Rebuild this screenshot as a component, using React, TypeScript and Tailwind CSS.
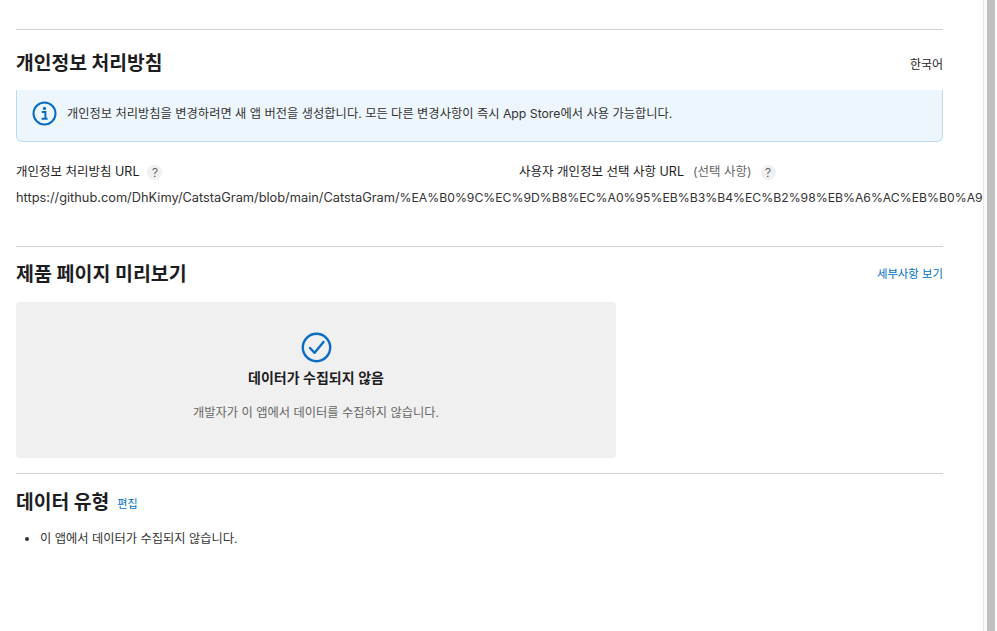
import React from "react";

const fontStack = "font-['Inter','Noto_Sans_CJK_KR',sans-serif]";

const urlPath = "https://github.com/DhKimy/CatstaGram/blob/main/CatstaGram/";
const urlEncoded = "%EA%B0%9C%EC%9D%B8%EC%A0%95%EB%B3%B4%EC%B2%98%EB%A6%AC%EB%B0%A9%EC%B9%A8.md";

const HelpBadge: React.FC = () => (
  <span className="w-[15px] h-[15px] rounded-full bg-[#f0f0f0] text-[#444] text-[12px] font-light leading-[15px] text-center">
    ?
  </span>
);

export default function App() {
  return (
    <div className={`${fontStack} flex h-[631px] w-[997px] overflow-hidden bg-white text-[#1d1d1f]`}>
      <main className="w-[983px] shrink-0 overflow-hidden pl-4 pt-[29px]">
        <div className="w-[927px]">
          {/* Privacy policy */}
          <section className="border-t border-[#d2d2d2]">
            <div className="flex h-[60px] items-start justify-between">
              <h2 className="mt-[19px] text-[19.3px] leading-[28px] font-bold">개인정보 처리방침</h2>
              <span className="mt-[27px] text-xs leading-[16px]">한국어</span>
            </div>
            <div className="flex h-[52px] items-center gap-[10px] rounded-b-md border border-t-0 border-[#bfdcf5] bg-[#eef6fd] pb-1 pl-[15px]">
              <svg width="25" height="25" viewBox="0 0 25 25" fill="none">
                <circle cx="12.5" cy="12.5" r="11" stroke="#0a6cc4" strokeWidth="2" />
                <circle cx="12.5" cy="7.4" r="1.6" fill="#0a6cc4" />
                <path d="M9.8 11h3.6v6.6M9.6 17.8h6" stroke="#0a6cc4" strokeWidth="2" />
              </svg>
              <p className="text-[12.25px] leading-[16px] text-[#333]">
                개인정보 처리방침을 변경하려면 새 앱 버전을 생성합니다. 모든 다른 변경사항이 즉시 App Store에서 사용 가능합니다.
              </p>
            </div>
            <div className="mt-[22px] flex h-4 text-[12.5px] leading-[16px]">
              <div className="flex w-[503px] items-center gap-2">
                <span>개인정보 처리방침 URL</span>
                <HelpBadge />
              </div>
              <div className="flex items-center">
                <span>사용자 개인정보 선택 사항 URL</span>
                <span className="ml-[9px] text-[#666]">(선택 사항)</span>
                <span className="ml-[9px] flex">
                  <HelpBadge />
                </span>
              </div>
            </div>
            <p className="mt-[10px] w-[967px] overflow-hidden whitespace-nowrap text-[12.8px] leading-[16px] text-[#333]">
              {urlPath}
              <span className="text-[12.2px]">{urlEncoded}</span>
            </p>
          </section>

          {/* Product page preview */}
          <section className="mt-[40px] border-t border-[#d2d2d2]">
            <div className="flex h-[55px] items-start justify-between">
              <h2 className="mt-[13px] text-[19.5px] leading-[28px] font-bold">제품 페이지 미리보기</h2>
              <a className="mt-[19px] text-[11.4px] leading-[16px] text-[#0070c9]">세부사항 보기</a>
            </div>
            <div className="flex h-[156px] w-[600px] flex-col items-center rounded bg-[#f0f0f0] pt-[30px]">
              <svg width="31" height="31" viewBox="0 0 31 31" fill="none">
                <circle cx="15.5" cy="15.5" r="13.7" stroke="#0a6cc4" strokeWidth="2.4" />
                <path d="M9 16l4.6 4.8L22.5 10" stroke="#0a6cc4" strokeWidth="2.4" strokeLinecap="round" strokeLinejoin="round" />
              </svg>
              <h3 className="mt-[5px] text-[14px] leading-[20px] font-semibold">데이터가 수집되지 않음</h3>
              <p className="mt-[17px] text-[12.25px] leading-[16px] text-[#666]">개발자가 이 앱에서 데이터를 수집하지 않습니다.</p>
            </div>
          </section>

          {/* Data types */}
          <section className="mt-[15px] border-t border-[#d2d2d2]">
            <div className="mt-[14px] flex items-center gap-[8px]">
              <h2 className="text-[19.3px] leading-[28px] font-bold">데이터 유형</h2>
              <a className="mt-[3px] text-[11px] leading-[16px] text-[#0070c9]">편집</a>
            </div>
            <ul className="mt-[15px] list-disc pl-6 text-[12.25px] leading-[16px] text-[#333]">
              <li>이 앱에서 데이터가 수집되지 않습니다.</li>
            </ul>
          </section>
        </div>
      </main>
      {/* Window scrollbar */}
      <div className="flex w-[14px] shrink-0 border-l border-[#e8e8e8] bg-[#fbfbfb] pl-[3px]">
        <div className="h-full w-2 bg-[#c1c1c1]" />
      </div>
    </div>
  );
}
